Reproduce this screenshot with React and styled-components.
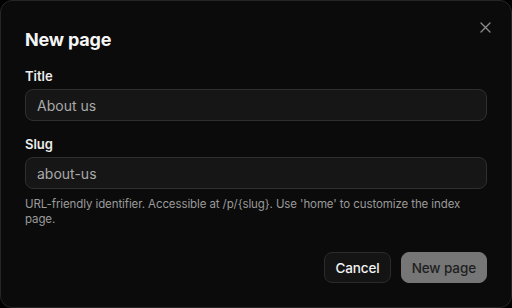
import React from 'react'
import styled, { createGlobalStyle } from 'styled-components'

const Global = createGlobalStyle`
  html, body {
    margin: 0;
    padding: 0;
    background: #000;
  }
  * {
    box-sizing: border-box;
  }
  body {
    font-family: Inter, "Noto Sans", "Liberation Sans", sans-serif;
    -webkit-font-smoothing: antialiased;
  }
`

const Dialog = styled.div`
  position: relative;
  width: 512px;
  height: 308px;
  background: #0b0b0b;
  border: 1px solid #262626;
  border-radius: 12px;
  padding: 25px 24px 24px;
  color: #f2f2f2;
  display: flex;
  flex-direction: column;
`

const Heading = styled.h2`
  margin: 0 0 14px;
  font-size: 18px;
  line-height: 28px;
  font-weight: 700;
  letter-spacing: -0.2px;
  color: #f5f5f5;
`

const CloseBtn = styled.button`
  position: absolute;
  top: 18px;
  right: 18px;
  width: 16px;
  height: 16px;
  padding: 0;
  border: none;
  background: none;
  color: #8a8a8a;
  display: flex;
  align-items: center;
  justify-content: center;
  cursor: pointer;
`

const Field = styled.div`
  display: flex;
  flex-direction: column;
  gap: 5px;
  & + & {
    margin-top: 15px;
  }
`

const Label = styled.label`
  font-size: 13px;
  line-height: 16px;
  font-weight: 600;
  color: #ededed;
`

const Input = styled.input`
  height: 32px;
  width: 100%;
  border: 1px solid #2f2f2f;
  border-radius: 8px;
  background: #161616;
  padding: 0 11px;
  font-family: inherit;
  font-size: 14px;
  color: #a9a9a9;
  outline: none;
`

const Hint = styled.p`
  margin: 8px 0 0;
  font-size: 11.5px;
  line-height: 15px;
  letter-spacing: -0.1px;
  color: #9a9a9a;
`

const Footer = styled.div`
  margin-top: auto;
  display: flex;
  justify-content: flex-end;
  gap: 10px;
`

const Button = styled.button`
  height: 31px;
  padding: 0 10px;
  border-radius: 8px;
  font-family: inherit;
  font-size: 13.5px;
  font-weight: 500;
  letter-spacing: -0.1px;
  border: 1px solid ${p => (p.primary ? '#767676' : '#2b2b2b')};
  background: ${p => (p.primary ? '#767676' : '#141414')};
  color: ${p => (p.primary ? '#1e1e1e' : '#f2f2f2')};
  cursor: pointer;
`

const hint = "URL-friendly identifier. Accessible at /p/{slug}. Use 'home' to customize the index page."

export default function App() {
  return (
    <>
      <Global />
      <Dialog>
        <Heading>New page</Heading>
        <CloseBtn aria-label="Close">
          <svg width="11" height="11" viewBox="0 0 11 11" fill="none" stroke="currentColor" strokeWidth="1.4" strokeLinecap="round">
            <path d="M1 1l9 9M10 1l-9 9" />
          </svg>
        </CloseBtn>
        <Field>
          <Label>Title</Label>
          <Input defaultValue="About us" />
        </Field>
        <Field>
          <Label>Slug</Label>
          <Input defaultValue="about-us" />
        </Field>
        <Hint>{hint}</Hint>
        <Footer>
          <Button>Cancel</Button>
          <Button primary>New page</Button>
        </Footer>
      </Dialog>
    </>
  )
}
